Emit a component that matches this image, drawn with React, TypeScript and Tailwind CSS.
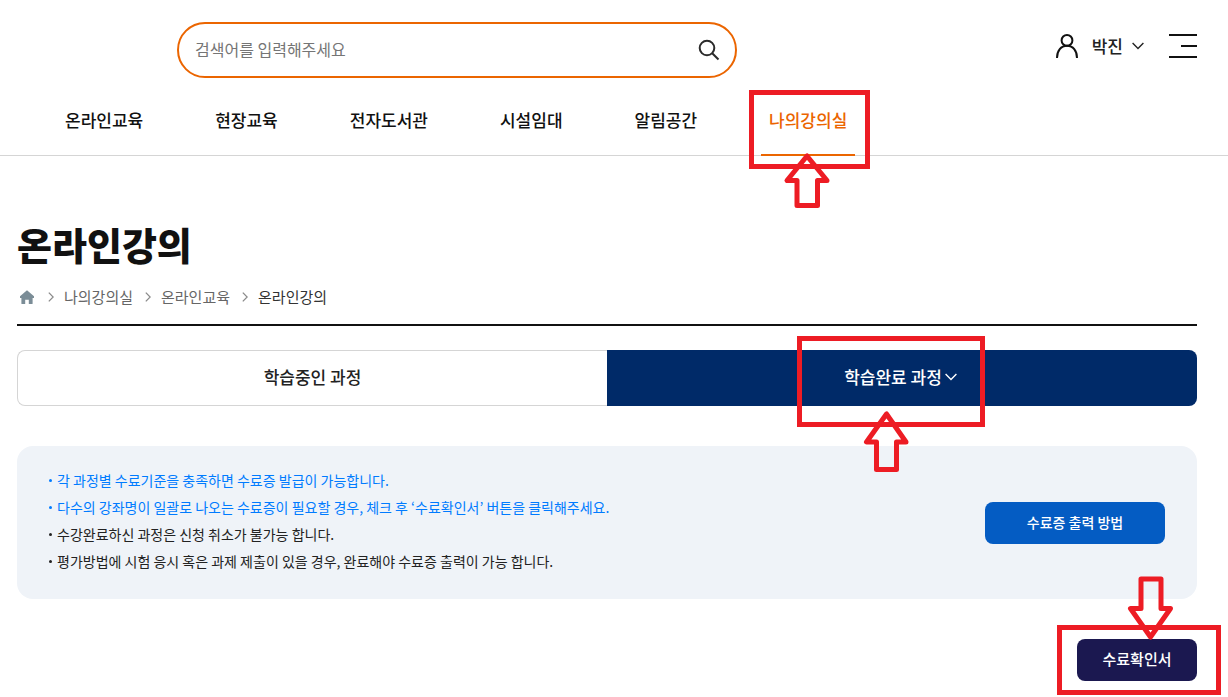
import React from "react";

type ArrowProps = { className: string; points: string; width: number; height: number };

function Arrow({ className, points, width, height }: ArrowProps) {
  return (
    <svg
      aria-hidden="true"
      className={`pointer-events-none absolute z-20 max-w-none ${className}`}
      width={width}
      height={height}
      viewBox={`0 0 ${width} ${height}`}
      fill="none"
      stroke="#ed1c24"
      strokeWidth="5"
      strokeLinejoin="round"
    >
      <polygon points={points} />
    </svg>
  );
}

function Frame({ className }: { className: string }) {
  return (
    <span
      aria-hidden="true"
      className={`pointer-events-none absolute z-10 border-5 border-[#ed1c24] ${className}`}
    />
  );
}

function Chevron() {
  return (
    <svg width="12" height="8" viewBox="0 0 12 8" fill="none" stroke="currentColor" strokeWidth="1.4" aria-hidden="true">
      <path d="M0.6 1 6 6.4 11.4 1" />
    </svg>
  );
}

function Separator() {
  return (
    <svg width="6" height="10" viewBox="0 0 6 10" fill="none" stroke="#8a8a8a" strokeWidth="1.3" aria-hidden="true">
      <path d="M0.8 0.6 5.2 5 0.8 9.4" />
    </svg>
  );
}

const menu = ["온라인교육", "현장교육", "전자도서관", "시설임대", "알림공간"];

const notices = [
  { text: "각 과정별 수료기준을 충족하면 수료증 발급이 가능합니다.", highlight: true },
  { text: "다수의 강좌명이 일괄로 나오는 수료증이 필요할 경우, 체크 후 ‘수료확인서’ 버튼을 클릭해주세요.", highlight: true },
  { text: "수강완료하신 과정은 신청 취소가 불가능 합니다.", highlight: false },
  { text: "평가방법에 시험 응시 혹은 과제 제출이 있을 경우, 완료해야 수료증 출력이 가능 합니다.", highlight: false },
];

function Header() {
  return (
    <header className="border-b border-[#d5d5d5]">
      <div className="flex items-start justify-between gap-8 pt-[22px] pr-[31px] pl-[177px]">
        <form
          role="search"
          onSubmit={(e) => e.preventDefault()}
          className="flex h-14 max-w-[560px] flex-1 items-center rounded-full border-2 border-[#eb6500] pr-[15px] pl-4"
        >
          <input
            type="search"
            aria-label="검색어"
            placeholder="검색어를 입력해주세요"
            className="h-full min-w-0 flex-1 bg-transparent pb-[2px] text-[16px] text-[#222] outline-none placeholder:text-[#757575]"
          />
          <button type="submit" aria-label="검색">
            <svg width="22" height="22" viewBox="0 0 22 22" fill="none" stroke="#2b2b2b" strokeWidth="2">
              <circle cx="9" cy="9" r="7.3" />
              <path d="M14.2 14.2 20.5 20.5" />
            </svg>
          </button>
        </form>
        <div className="flex h-12 shrink-0 items-center">
          <button type="button" className="flex items-center text-[#222]">
            <svg width="22" height="24" viewBox="0 0 22 24" fill="none" stroke="#111" strokeWidth="2" aria-hidden="true">
              <circle cx="11" cy="6.4" r="5.4" />
              <path d="M1 24C1 16.5 5 11.8 11 11.8S21 16.5 21 24" />
            </svg>
            <span className="ml-[14px] text-[17px] leading-6 font-medium">박진</span>
            <span className="ml-[9px]">
              <Chevron />
            </span>
          </button>
          <button type="button" aria-label="전체메뉴" className="ml-[25px]">
            <svg width="28" height="24" viewBox="0 0 28 24" fill="#111">
              <path d="M0 0h28v2H0zM12 11h16v2H12zM0 22h28v2H0z" />
            </svg>
          </button>
        </div>
      </div>
      <nav aria-label="주메뉴" className="mt-[6px] -mb-px pl-[57px]">
        <ul className="flex gap-14 text-[17px] font-medium text-[#111]">
          {menu.map((item) => (
            <li key={item}>
              <a href="#" className="flex h-[72px] items-center px-2">
                {item}
              </a>
            </li>
          ))}
          <li>
            <a
              href="#"
              aria-current="page"
              className="relative flex h-[72px] items-center border-b-2 border-[#eb6500] px-2 pt-[2px] text-[#eb6500]"
            >
              나의강의실
              <Frame className="top-[6px] -left-3 h-[79px] w-[121px]" />
              <Arrow
                className="top-[68px] left-[22px]"
                width={48}
                height={58}
                points="24,4 4,28.5 14,28.5 14,53.5 34.5,53.5 34.5,28.5 44,28.5"
              />
            </a>
          </li>
        </ul>
      </nav>
    </header>
  );
}

export default function App() {
  return (
    <div className="min-h-screen bg-white font-['Noto_Sans_CJK_KR','Noto_Sans',sans-serif] text-[#222]">
      <Header />
      <main className="pt-[60px] pr-[31px] pb-4 pl-[17px]">
        <div className="border-b-2 border-[#111] pb-[15px]">
          <h1 className="text-[38px] leading-[56px] font-extrabold text-[#111]">온라인강의</h1>
          <nav aria-label="현재 위치" className="mt-[13px]">
            <ol className="flex h-6 items-center gap-3 pl-[3px] text-[15px] text-[#666]">
              <li className="pr-[2px]">
                <a href="#" aria-label="홈">
                  <svg width="14" height="14" viewBox="0 0 14 14" fill="#7b8d97">
                    <path d="M7 0.2 14 6.2V8H12.6V13.4Q12.6 14 12 14H8.8V9.8H5.2V14H2Q1.4 14 1.4 13.4V8H0V6.2Z" />
                  </svg>
                </a>
              </li>
              {["나의강의실", "온라인교육", "온라인강의"].map((item, i) => (
                <li key={item} className="flex items-center gap-[10px]">
                  <Separator />
                  <a href="#" aria-current={i === 2 ? "page" : undefined} className={i === 2 ? "text-[#333]" : ""}>
                    {item}
                  </a>
                </li>
              ))}
            </ol>
          </nav>
        </div>

        <div role="tablist" className="mt-6 grid h-14 grid-cols-2 text-[17px] font-medium">
          <button type="button" role="tab" aria-selected="false" className="rounded-l-lg border border-r-0 border-[#d5d5d5] pb-[2px]">
            학습중인 과정
          </button>
          <button
            type="button"
            role="tab"
            aria-selected="true"
            className="flex items-center justify-center rounded-r-lg bg-[#002a68] pr-[3px] pb-[2px] text-white"
          >
            <span className="relative flex items-center gap-[3px]">
              학습완료 과정
              <Chevron />
              <Frame className="-top-[28px] -left-[47px] h-[91px] w-[188px]" />
              <Arrow
                className="top-[46px] left-[19px]"
                width={48}
                height={64}
                points="23.5,4 3.5,32 13.5,32 13.5,59.5 33.5,59.5 33.5,32 43,32"
              />
            </span>
          </button>
        </div>

        <section className="mt-10 flex min-h-[153px] items-center justify-between gap-8 rounded-2xl bg-[#eff3f8] px-8">
          <ul className="pb-[3px] text-[14px] leading-[27px]">
            {notices.map((n) => (
              <li key={n.text} className={n.highlight ? "flex gap-[5px] text-[#007bff]" : "flex gap-[5px]"}>
                <span aria-hidden="true" className="mt-3 h-[3px] w-[3px] shrink-0 rounded-full bg-current" />
                {n.text}
              </li>
            ))}
          </ul>
          <button type="button" className="h-[42px] w-[180px] shrink-0 rounded-lg bg-[#045cc3] text-[14px] font-medium text-white">
            수료증 출력 방법
          </button>
        </section>

        <div className="mt-10 flex justify-end">
          <button type="button" className="relative h-[42px] w-[120px] rounded-lg bg-[#1b1850] pb-[2px] text-[15px] font-medium text-white">
            수료확인서
            <Frame className="-top-[14px] -left-5 h-[70px] w-[164px]" />
            <Arrow
              className="-top-[64px] left-[50px]"
              width={48}
              height={68}
              points="23.5,62 3.5,33.5 14,33.5 14,4 34,4 34,33.5 43.5,33.5"
            />
          </button>
        </div>
      </main>
    </div>
  );
}
